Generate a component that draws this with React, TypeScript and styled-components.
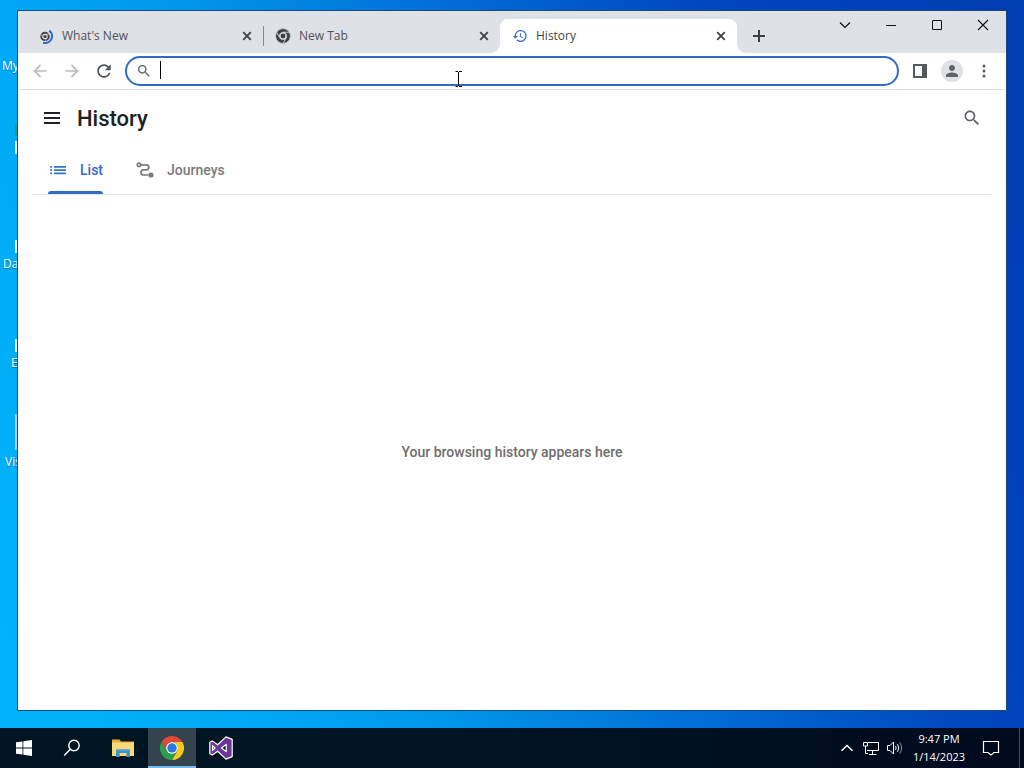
import React from "react";
import styled, { createGlobalStyle } from "styled-components";

const GlobalStyle = createGlobalStyle`
  *, *::before, *::after { box-sizing: border-box; }
  body { margin: 0; }
  button, input { font: inherit; color: inherit; margin: 0; padding: 0; border: 0; background: none; }
  svg { display: block; flex: none; }
`;

const ui = `"Open Sans", "Noto Sans", sans-serif`;

/* ---------- desktop ---------- */

const Screen = styled.div`
  display: flex;
  flex-direction: column;
  height: 100vh;
  overflow: hidden;
  font-family: ${ui};
  font-size: 12px;
  background: linear-gradient(70deg, #00b4fa 0%, #00aaf6 20%, #0096ea 36%, #0072d8 53%, #0046bc 76%, #003cb2 100%);
`;

const Desktop = styled.div`
  position: relative;
  flex: 1;
  min-height: 0;
  display: flex;
  padding: 10px 17px 17px;
`;

const Shortcut = styled.div<{ $top: number; $left: number }>`
  position: absolute;
  top: ${(p) => p.$top}px;
  left: ${(p) => p.$left}px;
  line-height: 16px;
  color: #fff;
  white-space: nowrap;
  text-shadow: 0 1px 1px rgba(0, 40, 90, 0.5);
`;

const ShortcutArt = styled.div<{ $top: number; $height: number; $color: string }>`
  position: absolute;
  top: ${(p) => p.$top}px;
  left: 15px;
  width: 24px;
  height: ${(p) => p.$height}px;
  background: ${(p) => p.$color};
`;

/* ---------- browser window ---------- */

const Window = styled.main`
  position: relative;
  flex: 1;
  min-width: 0;
  display: flex;
  flex-direction: column;
  border: 1px solid #164a80;
  background: #fff;
`;

const TabStrip = styled.div`
  display: flex;
  align-items: flex-end;
  height: 42px;
  padding-left: 8px;
  background: #dee1e6;
`;

const Tab = styled.div<{ $active?: boolean; $divider?: boolean }>`
  position: relative;
  display: flex;
  align-items: center;
  gap: 8px;
  flex: 0 1 237px;
  min-width: 0;
  height: 34px;
  padding: 0 8px 0 12px;
  border-radius: 8px 8px 0 0;
  color: ${(p) => (p.$active ? "#45474a" : "#505357")};
  background: ${(p) => (p.$active ? "#fff" : "transparent")};

  ${(p) =>
    p.$divider &&
    `&::after {
      content: "";
      position: absolute;
      right: -1px;
      top: 7px;
      width: 1px;
      height: 20px;
      background: #85888d;
    }`}

  ${(p) =>
    p.$active &&
    `&::before, &::after {
      content: "";
      position: absolute;
      bottom: 0;
      width: 8px;
      height: 8px;
    }
    &::before { left: -8px; background: radial-gradient(circle at 0 0, transparent 7px, #fff 8px); }
    &::after { right: -8px; background: radial-gradient(circle at 100% 0, transparent 7px, #fff 8px); }`}
`;

const TabIcon = styled.span<{ $active: boolean }>`
  display: flex;
  color: ${(p) => (p.$active ? "#3b72cc" : "inherit")};
`;

const TabTitle = styled.span`
  flex: 1;
  min-width: 0;
  overflow: hidden;
  white-space: nowrap;
  line-height: 16px;
`;

const IconButton = styled.button<{ $w: number; $h: number; $color?: string }>`
  display: flex;
  align-items: center;
  justify-content: center;
  flex: none;
  width: ${(p) => p.$w}px;
  height: ${(p) => p.$h}px;
  color: ${(p) => p.$color ?? "#5f6368"};
`;

const NewTab = styled(IconButton)`
  margin: 0 8px 3px;
`;

const WindowControls = styled.div`
  display: flex;
  align-self: flex-start;
  margin-left: auto;
`;

const Toolbar = styled.div`
  display: flex;
  align-items: center;
  height: 37px;
  padding: 0 8px;
  gap: 7px;
  border-bottom: 1px solid #dcdcdc;
`;

const ButtonGroup = styled.div`
  display: flex;
  gap: 4px;
`;

const Omnibox = styled.label`
  display: flex;
  align-items: center;
  flex: 1;
  min-width: 0;
  height: 30px;
  padding: 0 10px 0 9px;
  border: 2px solid #306cc0;
  border-radius: 15px;
  color: #5f6368;
`;

const Caret = styled.span`
  flex: none;
  width: 1px;
  height: 18px;
  margin: 0 0 3px 8px;
  background: #000;
`;

const OmniInput = styled.input`
  flex: 1;
  min-width: 0;
  height: 24px;
  outline: 0;
`;

const Avatar = styled.span`
  display: flex;
  align-items: center;
  justify-content: center;
  width: 22px;
  height: 22px;
  border-radius: 50%;
  background: #e0e1e6;
`;

const Pointer = styled.svg`
  position: absolute;
  top: 60px;
  left: 437px;
`;

/* ---------- history page ---------- */

const Page = styled.section`
  display: flex;
  flex-direction: column;
  flex: 1;
  min-height: 0;
  font-family: Roboto, sans-serif;
  font-size: 14px;
  font-weight: 500;
`;

const PageHeader = styled.header`
  display: flex;
  align-items: center;
  height: 56px;
  padding: 0 24px 0 26px;
`;

const PageTitle = styled.h1`
  flex: 1;
  margin: 0 0 0 17px;
  padding-top: 2px;
  font-size: 22px;
  line-height: 28px;
  font-weight: 500;
  color: #202124;
`;

const ViewTabs = styled.nav`
  display: flex;
  gap: 32px;
  height: 49px;
  margin: 0 14px;
  padding-left: 16px;
  border-bottom: 1px solid #e4e5e7;
`;

const ViewTab = styled.button<{ $active?: boolean }>`
  position: relative;
  display: flex;
  align-items: center;
  gap: 12px;
  padding-bottom: 1px;
  color: ${(p) => (p.$active ? "#3569c8" : "#7a7a7c")};

  ${(p) =>
    p.$active &&
    `&::after {
      content: "";
      position: absolute;
      left: 0;
      right: 0;
      bottom: 0;
      height: 3px;
      border-radius: 3px 3px 0 0;
      background: #306cc0;
    }`}
`;

const EmptyState = styled.p`
  display: flex;
  align-items: center;
  justify-content: center;
  flex: 1;
  margin: 0;
  padding-bottom: 2px;
  line-height: 20px;
  color: #6e6e6e;
`;

/* ---------- taskbar ---------- */

const Taskbar = styled.footer`
  display: flex;
  flex: none;
  height: 40px;
  background: linear-gradient(90deg, #001521, #001424 50%, #000a1e);
  color: #fff;
`;

const TaskButton = styled.button<{ $active?: boolean }>`
  display: flex;
  align-items: center;
  justify-content: center;
  width: 48px;
  height: 40px;
  background: ${(p) => (p.$active ? "#33444f" : "none")};
  box-shadow: ${(p) => (p.$active ? "inset 0 -2px #76b9ed" : "none")};
`;

const PinnedApps = styled.div`
  display: flex;
  gap: 1px;
  margin-left: 3px;
`;

const Tray = styled.div`
  display: flex;
  align-items: center;
  margin-left: auto;
`;

const Clock = styled.time`
  width: 64px;
  text-align: center;
  font-size: 11px;
  line-height: 18px;
  white-space: nowrap;
`;

const ShowDesktop = styled.button`
  width: 5px;
  height: 40px;
  margin-left: 8px;
  border-left: 1px solid #4b525c;
`;

/* ---------- icons ---------- */

const Material = ({ d, size, flip }: { d: string; size: number; flip?: boolean }) => (
  <svg width={size} height={size} viewBox="0 0 24 24" fill="currentColor" aria-hidden="true">
    <path d={d} transform={flip ? "matrix(-1 0 0 1 24 0)" : undefined} />
  </svg>
);

const backPath = "M20 11H7.83l5.59-5.59L12 4l-8 8 8 8 1.41-1.41L7.83 13H20v-2z";
const reloadPath =
  "M17.65 6.35C16.2 4.9 14.21 4 12 4c-4.42 0-7.99 3.58-7.99 8s3.57 8 7.99 8c3.73 0 6.84-2.55 7.73-6h-2.08c-.82 2.33-3.04 4-5.65 4-3.31 0-6-2.69-6-6s2.69-6 6-6c1.66 0 3.14.69 4.22 1.78L13 11h7V4l-2.35 2.35z";
const searchPath =
  "M15.5 14h-.79l-.28-.27C15.41 12.59 16 11.11 16 9.5 16 5.91 13.09 3 9.5 3S3 5.91 3 9.5 5.91 16 9.5 16c1.61 0 3.09-.59 4.23-1.57l.27.28v.79l5 4.99L20.49 19l-4.99-5zm-6 0C7.01 14 5 11.99 5 9.5S7.01 5 9.5 5 14 7.01 14 9.5 11.99 14 9.5 14z";
const historyPath =
  "M13 3c-4.97 0-9 4.03-9 9H1l3.89 3.89.07.14L9 12H6c0-3.87 3.13-7 7-7s7 3.13 7 7-3.13 7-7 7c-1.93 0-3.68-.79-4.94-2.06l-1.42 1.42C8.27 19.99 10.51 21 13 21c4.97 0 9-4.03 9-9s-4.03-9-9-9zm-1 5v5l4.28 2.54.72-1.21-3.5-2.08V8H12z";
const personPath =
  "M12 12c2.21 0 4-1.79 4-4s-1.79-4-4-4-4 1.79-4 4 1.79 4 4 4zm0 2c-2.67 0-8 1.34-8 4v2h16v-2c0-2.66-5.33-4-8-4z";

const chromeRed =
  "M24,12H44.7812a23.9939,23.9939,0,0,0-41.5639.0029L13.6079,30l.0093-.0024A11.9852,11.9852,0,0,1,24,12Z";
const chromeYellow =
  "M34.3913,30.0029,24.0007,48A23.994,23.994,0,0,0,44.78,12.0031H23.9989l-.0025.0093A11.985,11.985,0,0,1,34.3913,30.0029Z";
const chromeGreen =
  "M13.6086,30.0031,3.218,12.006A23.994,23.994,0,0,0,24.0025,48L34.3931,30.0029l-.0067-.0068a11.9852,11.9852,0,0,1-20.7778.007Z";

const ChromeLogo = () => (
  <svg width="24" height="24" viewBox="0 0 48 48" aria-hidden="true">
    <circle cx="24" cy="24" r="12" fill="#fff" />
    <path d={chromeRed} fill="#e5483a" />
    <path d={chromeYellow} fill="#fbc91e" />
    <path d={chromeGreen} fill="#2ba04c" />
    <circle cx="24" cy="24" r="9.5" fill="#2a78e0" />
  </svg>
);

const ChromeMono = () => (
  <svg width="16" height="16" viewBox="-2 -2 52 52" aria-hidden="true">
    <g fill="#3f4347" stroke="#dee1e6" strokeWidth="2">
      <path d={chromeRed} />
      <path d={chromeYellow} />
      <path d={chromeGreen} />
    </g>
    <circle cx="24" cy="24" r="8" fill="#3f4347" />
  </svg>
);

const WhatsNewIcon = () => (
  <svg width="16" height="16" viewBox="0 0 16 16" fill="none" aria-hidden="true">
    <circle cx="7" cy="8.5" r="3.7" stroke="#3f4347" strokeWidth="2" />
    <circle cx="7" cy="8.5" r="1.6" fill="#3f4347" />
    <path d="M7 6.2h4M5 9.7l-1.8-3.1M9 9.7l-2 3.4" stroke="#dee1e6" strokeWidth=".6" />
    <path d="M11.2 2.6A6.9 6.9 0 0 1 5 14.7" stroke="#2f6fd0" strokeWidth="2.2" />
  </svg>
);

const CloseTabIcon = () => (
  <svg width="16" height="16" viewBox="0 0 16 16" stroke="#3c4043" strokeWidth="1.8" aria-hidden="true">
    <path d="M4.2 4.2l7.6 7.6M11.8 4.2l-7.6 7.6" />
  </svg>
);

const MenuIcon = () => (
  <svg width="16" height="12" fill="#202124" aria-hidden="true">
    <path d="M0 0h16v2H0zM0 5h16v2H0zM0 10h16v2H0z" />
  </svg>
);

const ListIcon = () => (
  <svg width="20" height="20" fill="#3575c8" aria-hidden="true">
    <path d="M6 6h12v1.8H6zM6 9.2h12v1.8H6zM6 12.4h12v1.8H6zM2.2 6h1.8v1.8H2.2zM2.2 9.2h1.8v1.8H2.2zM2.2 12.4h1.8v1.8H2.2z" />
  </svg>
);

const JourneysIcon = () => (
  <svg width="20" height="20" fill="none" stroke="#7a7a7c" strokeWidth="1.7" aria-hidden="true">
    <circle cx="4" cy="4.8" r="1.7" />
    <path d="M6 4.8h5.3a2.5 2.5 0 0 1 0 5H8.6a2.6 2.6 0 0 0 0 5.2h5" />
    <circle cx="16" cy="15" r="1.7" fill="#7a7a7c" />
  </svg>
);

const WindowsLogo = () => (
  <svg width="16" height="16" viewBox="0 0 16 16" fill="#fff" aria-hidden="true">
    <path d="M0 2.3l6.5-.9v6.2H0zM7.3 1.3L16 0v7.6H7.3zM0 8.4h6.5v6.2L0 13.7zM7.3 8.4H16V16l-8.7-1.2z" />
  </svg>
);

const TaskSearch = () => (
  <svg width="18" height="18" fill="none" stroke="#fff" strokeWidth="1.4" aria-hidden="true">
    <circle cx="11" cy="6.5" r="5.2" />
    <path d="M7.3 10.3L1.2 16.6" />
  </svg>
);

const FolderIcon = () => (
  <svg width="22" height="20" viewBox="0 0 22 20" aria-hidden="true">
    <path d="M0 1.5h7.5l1.5 2H22V18H0z" fill="#e7ad3c" />
    <path d="M0 4.5h22V18H0z" fill="#fbda75" />
    <path d="M4 19v-8h14v8h-3.6v-4H7.6v4z" fill="#3f94cf" />
    <path d="M4 11h14v1.5H4z" fill="#67afdb" />
  </svg>
);

const VisualStudioIcon = () => (
  <svg width="24" height="24" viewBox="0 0 24 24" aria-hidden="true">
    <path
      fillRule="evenodd"
      d="M17 .9L23.2 3.4V20.6L17 23.1L8.6 15.2L3.4 19L.8 17.8V6.2L3.4 5L8.6 8.8ZM17.2 8.4L12.4 12L17.2 15.6ZM3.6 9.6V14.4L6 12Z"
      fill="#6b3695"
      stroke="#fff"
      strokeWidth="1.2"
      strokeLinejoin="round"
    />
  </svg>
);

const NetworkIcon = () => (
  <svg width="18" height="16" fill="none" stroke="#fff" aria-hidden="true">
    <path d="M6 2.5h10.5v8H5M10.5 11v3M7 14.5h7.5M1.5 2.5h4v3.5h-4zM3.5 6v7.5H6" />
  </svg>
);

const SpeakerIcon = () => (
  <svg width="18" height="16" fill="none" stroke="#fff" aria-hidden="true">
    <path d="M1.5 5.5h2.5l3.5-3.5v12l-3.5-3.5h-2.5z" />
    <path d="M9.5 6q1.3 2 0 4M11.5 4.2q2.6 3.8 0 7.6" />
    <path d="M13.8 2.5q3.6 5.5 0 11" stroke="#8a9099" />
  </svg>
);

const ActionCenterIcon = () => (
  <svg width="18" height="18" fill="none" stroke="#fff" strokeWidth="1.2" aria-hidden="true">
    <path d="M1.5 2.5h15v11h-4.5L9 16l-3-2.5H1.5z" />
  </svg>
);

/* ---------- app ---------- */

const tabs = [
  { title: "What's New", icon: <WhatsNewIcon />, divider: true, active: false },
  { title: "New Tab", icon: <ChromeMono />, divider: false, active: false },
  { title: "History", icon: <Material d={historyPath} size={16} />, divider: false, active: true },
];

export default function App() {
  return (
    <Screen>
      <GlobalStyle />
      <Desktop>
        <ShortcutArt $top={124} $height={12} $color="#259a7c" />
        <ShortcutArt $top={141} $height={13} $color="#e4f4ff" />
        <ShortcutArt $top={240} $height={13} $color="#e4f4ff" />
        <ShortcutArt $top={339} $height={13} $color="#e4f4ff" />
        <ShortcutArt $top={414} $height={36} $color="#9fd2ee" />
        <Shortcut $top={58} $left={2}>My</Shortcut>
        <Shortcut $top={256} $left={3}>Da</Shortcut>
        <Shortcut $top={355} $left={11}>E</Shortcut>
        <Shortcut $top={454} $left={5}>Vis</Shortcut>

        <Window>
          <TabStrip>
            {tabs.map((t) => (
              <Tab key={t.title} $active={t.active} $divider={t.divider}>
                <TabIcon $active={t.active}>{t.icon}</TabIcon>
                <TabTitle>{t.title}</TabTitle>
                <IconButton $w={16} $h={16} aria-label={`Close ${t.title}`}>
                  <CloseTabIcon />
                </IconButton>
              </Tab>
            ))}
            <NewTab $w={28} $h={28} aria-label="New tab">
              <svg width="12" height="12" stroke="#3c4043" strokeWidth="2" aria-hidden="true">
                <path d="M6 0v12M0 6h12" />
              </svg>
            </NewTab>
            <WindowControls>
              <IconButton $w={46} $h={28} aria-label="Search tabs">
                <svg width="12" height="8" fill="none" stroke="#111" strokeWidth="1.2" aria-hidden="true">
                  <path d="M1 1.5l5 5 5-5" />
                </svg>
              </IconButton>
              <IconButton $w={46} $h={28} aria-label="Minimize">
                <svg width="10" height="1" fill="#111" aria-hidden="true">
                  <path d="M0 0h10v1H0z" />
                </svg>
              </IconButton>
              <IconButton $w={46} $h={28} aria-label="Maximize">
                <svg width="10" height="10" fill="none" stroke="#111" aria-hidden="true">
                  <path d="M.5.5h9v9h-9z" />
                </svg>
              </IconButton>
              <IconButton $w={46} $h={28} aria-label="Close">
                <svg width="12" height="12" stroke="#111" strokeWidth="1.1" aria-hidden="true">
                  <path d="M1 1l10 10M11 1L1 11" />
                </svg>
              </IconButton>
            </WindowControls>
          </TabStrip>

          <Toolbar>
            <ButtonGroup>
              <IconButton $w={28} $h={28} $color="#b9bbbe" aria-label="Back">
                <Material d={backPath} size={20} />
              </IconButton>
              <IconButton $w={28} $h={28} $color="#b9bbbe" aria-label="Forward">
                <Material d={backPath} size={20} flip />
              </IconButton>
              <IconButton $w={28} $h={28} $color="#4e5256" aria-label="Reload">
                <Material d={reloadPath} size={20} />
              </IconButton>
            </ButtonGroup>
            <Omnibox>
              <Material d={searchPath} size={16} />
              <Caret />
              <OmniInput type="text" aria-label="Address and search bar" />
            </Omnibox>
            <ButtonGroup>
              <IconButton $w={28} $h={28} aria-label="Side panel">
                <svg width="14" height="14" aria-hidden="true">
                  <path d="M1 1h12v12H1z" fill="none" stroke="#55585c" strokeWidth="2" />
                  <path d="M9 0h5v14H9z" fill="#55585c" />
                </svg>
              </IconButton>
              <IconButton $w={28} $h={28} aria-label="Profile">
                <Avatar>
                  <Material d={personPath} size={18} />
                </Avatar>
              </IconButton>
              <IconButton $w={28} $h={28} aria-label="Menu">
                <svg width="4" height="14" fill="#55585c" aria-hidden="true">
                  <circle cx="2" cy="2" r="1.5" />
                  <circle cx="2" cy="7" r="1.5" />
                  <circle cx="2" cy="12" r="1.5" />
                </svg>
              </IconButton>
            </ButtonGroup>
          </Toolbar>

          <Page>
            <PageHeader>
              <IconButton $w={16} $h={16} aria-label="Main menu">
                <MenuIcon />
              </IconButton>
              <PageTitle>History</PageTitle>
              <IconButton $w={20} $h={20} aria-label="Search history">
                <Material d={searchPath} size={20} />
              </IconButton>
            </PageHeader>
            <ViewTabs>
              <ViewTab $active>
                <ListIcon />
                List
              </ViewTab>
              <ViewTab>
                <JourneysIcon />
                Journeys
              </ViewTab>
            </ViewTabs>
            <EmptyState>Your browsing history appears here</EmptyState>
          </Page>

          <Pointer width="8" height="16" fill="none" stroke="#000" aria-hidden="true">
            <path d="M.5.5H3M4 .5h3M3.5 1v14M.5 15.5H3M4 15.5h3" />
          </Pointer>
        </Window>
      </Desktop>

      <Taskbar>
        <TaskButton aria-label="Start">
          <WindowsLogo />
        </TaskButton>
        <TaskButton aria-label="Search">
          <TaskSearch />
        </TaskButton>
        <PinnedApps>
          <TaskButton aria-label="File Explorer">
            <FolderIcon />
          </TaskButton>
          <TaskButton $active aria-label="Google Chrome">
            <ChromeLogo />
          </TaskButton>
          <TaskButton aria-label="Visual Studio">
            <VisualStudioIcon />
          </TaskButton>
        </PinnedApps>
        <Tray>
          <IconButton $w={24} $h={40} aria-label="Show hidden icons">
            <svg width="14" height="8" fill="none" stroke="#fff" strokeWidth="1.4" aria-hidden="true">
              <path d="M1.5 6.8L7 1.4l5.5 5.4" />
            </svg>
          </IconButton>
          <IconButton $w={24} $h={40} aria-label="Network">
            <NetworkIcon />
          </IconButton>
          <IconButton $w={24} $h={40} aria-label="Volume">
            <SpeakerIcon />
          </IconButton>
          <Clock>
            9:47 PM
            <br />
            1/14/2023
          </Clock>
          <IconButton $w={40} $h={40} aria-label="Notifications">
            <ActionCenterIcon />
          </IconButton>
          <ShowDesktop aria-label="Show desktop" />
        </Tray>
      </Taskbar>
    </Screen>
  );
}
